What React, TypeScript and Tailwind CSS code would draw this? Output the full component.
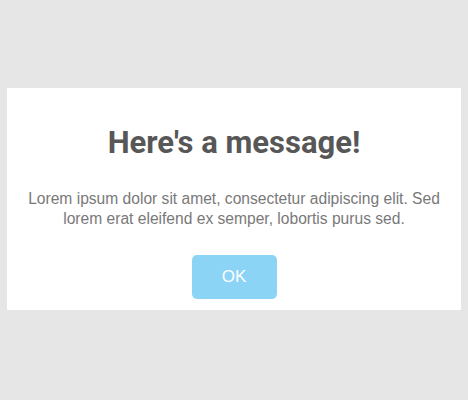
export default function App() {
  return (
    <div className="w-[468px] h-[400px] bg-[#e6e6e6] pt-[88px] pl-[7px]">
      <div className="w-[454px] h-[222px] bg-white flex flex-col items-center pt-[37px] text-center font-['Liberation_Sans',Arial,sans-serif]">
        <h2 className="text-[31px] leading-[36px] font-bold text-[#575757] font-['Roboto','Liberation_Sans',Arial,sans-serif]">
          Here's a message!
        </h2>
        <p className="mt-[28px] text-[15.6px] leading-[20px] text-[#797979] px-[10px]">
          Lorem ipsum dolor sit amet, consectetur adipiscing elit. Sed lorem erat eleifend ex semper, lobortis purus sed.
        </p>
        <button className="mt-[26px] w-[85px] h-[44px] rounded-[5px] bg-[#8cd4f5] text-white text-[17px]">
          OK
        </button>
      </div>
    </div>
  );
}
